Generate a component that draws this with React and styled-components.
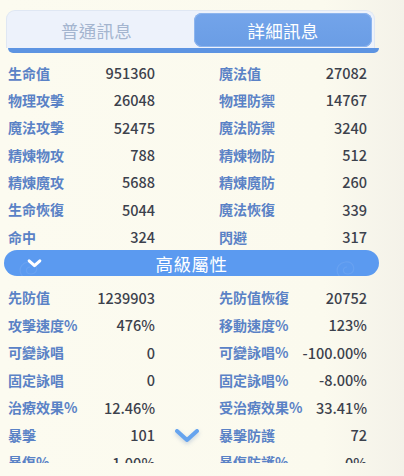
import React from 'react';
import styled, { createGlobalStyle } from 'styled-components';

const Global = createGlobalStyle`
  body {
    margin: 0;
    background: linear-gradient(90deg, #fcfbf0 0%, #fbfaee 80%, #f4f2e9 100%);
    font-family: "Noto Sans CJK TC", "Noto Sans", sans-serif;
  }
`;

const basic = [
  ['生命值', '951360', '魔法值', '27082'],
  ['物理攻擊', '26048', '物理防禦', '14767'],
  ['魔法攻擊', '52475', '魔法防禦', '3240'],
  ['精煉物攻', '788', '精煉物防', '512'],
  ['精煉魔攻', '5688', '精煉魔防', '260'],
  ['生命恢復', '5044', '魔法恢復', '339'],
  ['命中', '324', '閃避', '317'],
];

const advanced = [
  ['先防值', '1239903', '先防值恢復', '20752'],
  ['攻擊速度%', '476%', '移動速度%', '123%'],
  ['可變詠唱', '0', '可變詠唱%', '-100.00%'],
  ['固定詠唱', '0', '固定詠唱%', '-8.00%'],
  ['治療效果%', '12.46%', '受治療效果%', '33.41%'],
  ['暴擊', '101', '暴擊防護', '72'],
  ['暴傷%', '1.00%', '暴傷防護%', '0%'],
];

function StatRows({ rows }) {
  return rows.map((r, i) => (
    <React.Fragment key={i}>
      <Label>{r[0]}</Label>
      <Value>{r[1]}</Value>
      <span />
      <Label>{r[2]}</Label>
      <Value>{r[3]}</Value>
    </React.Fragment>
  ));
}

export default function App() {
  return (
    <Page>
      <Global />
      <Tabs>
        <Tab>普通訊息</Tab>
        <Tab active>詳細訊息</Tab>
      </Tabs>
      <TabLine />
      <Scroll>
        <Grid rowH={27.33}>
          <StatRows rows={basic} />
        </Grid>
        <Header>
          <HeaderChevron viewBox="0 0 14 10">
            <path d="M2 2.5 L7 7 L12 2.5" />
          </HeaderChevron>
          <Swirl viewBox="0 0 40 30" style={{ left: 8 }}>
            <path d="M20 30 C6 30 4 14 16 12 C26 10 28 24 19 24 C13 24 13 17 18 17" />
          </Swirl>
          <Swirl viewBox="0 0 40 30" style={{ right: 10 }}>
            <path d="M20 30 C6 30 4 14 16 12 C26 10 28 24 19 24 C13 24 13 17 18 17" />
          </Swirl>
          <HeaderTitle>高級屬性</HeaderTitle>
        </Header>
        <Grid rowH={27.55} top={7}>
          <StatRows rows={advanced} />
        </Grid>
      </Scroll>
      <MoreChevron viewBox="0 0 26 16">
        <path d="M3 3 L13 12 L23 3" />
      </MoreChevron>
    </Page>
  );
}

const Page = styled.div`
  position: relative;
  width: 404px;
  height: 476px;
  padding: 10px 0 0 4px;
  box-sizing: border-box;
  overflow: hidden;
`;

const Tabs = styled.div`
  display: flex;
  margin-left: 2px;
  width: 369px;
  height: 38px;
  box-sizing: border-box;
  padding: 2px 2px 0 2px;
  background: #edf2fb;
  border: 1px solid #dfe7f3;
  border-bottom: none;
  border-radius: 9px 9px 0 0;
`;

const Tab = styled.div`
  flex: ${(p) => (p.active ? '0 0 178px' : '1')};
  display: flex;
  align-items: center;
  justify-content: center;
  height: 34px;
  padding-right: ${(p) => (p.active ? '0' : '10px')};
  border-radius: 8px;
  font-size: 17.5px;
  letter-spacing: 0.3px;
  color: ${(p) => (p.active ? '#ffffff' : '#a4b5cf')};
  background: ${(p) =>
    p.active ? 'linear-gradient(180deg, #73a4ea 0%, #6a9de5 100%)' : 'transparent'};
  box-shadow: ${(p) => (p.active ? 'inset 0 0 0 1px #8db5ee' : 'none')};
`;

const TabLine = styled.div`
  margin-left: 4px;
  width: 371px;
  height: 5px;
  background: #5d94e2;
  border-radius: 0 0 8px 8px;
`;

const Scroll = styled.div`
  height: 410px;
  padding-top: 6px;
  box-sizing: border-box;
  overflow: hidden;
`;

const Grid = styled.div`
  display: grid;
  grid-template-columns: 84px 63px 64px 82px 66px;
  grid-auto-rows: ${(p) => p.rowH}px;
  align-items: center;
  padding-left: 4px;
  margin-top: ${(p) => p.top || 0}px;
`;

const Label = styled.span`
  font-size: 14px;
  font-weight: 600;
  color: #5a82c6;
  white-space: nowrap;
`;

const Value = styled.span`
  font-size: 14.5px;
  font-weight: 500;
  color: #3c414c;
  text-align: right;
  white-space: nowrap;
`;

const Header = styled.div`
  position: relative;
  display: flex;
  align-items: center;
  justify-content: center;
  width: 375px;
  height: 26px;
  border-radius: 13px;
  background: #5b9af0;
  overflow: hidden;
`;

const HeaderTitle = styled.span`
  font-size: 17.5px;
  color: #ffffff;
  letter-spacing: 0.5px;
`;

const HeaderChevron = styled.svg`
  position: absolute;
  left: 23px;
  top: 8px;
  width: 15px;
  height: 11px;
  fill: none;
  stroke: #ffffff;
  stroke-width: 2.8;
  stroke-linecap: round;
  stroke-linejoin: round;
`;

const Swirl = styled.svg`
  position: absolute;
  top: 0;
  width: 40px;
  height: 30px;
  fill: none;
  stroke: rgba(255, 255, 255, 0.08);
  stroke-width: 1.2;
`;

const MoreChevron = styled.svg`
  position: absolute;
  left: 174px;
  top: 428px;
  width: 26px;
  height: 16px;
  fill: none;
  stroke: #66a4ee;
  stroke-width: 4;
  stroke-linecap: round;
  stroke-linejoin: round;
  filter: drop-shadow(0 2px 2px rgba(80, 120, 180, 0.3));
`;
